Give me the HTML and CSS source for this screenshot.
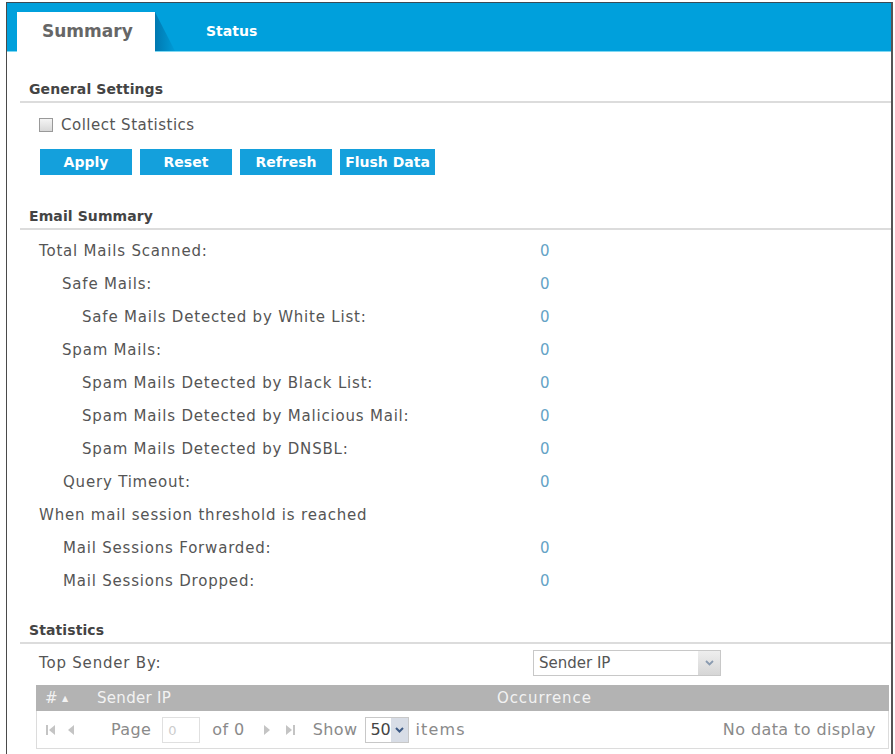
FILE: index.html
```html
<!DOCTYPE html>
<html lang="en">
<head>
    <meta charset="UTF-8">
    <meta name="viewport" content="width=device-width, initial-scale=1.0">
    <title>Anti-Spam Summary</title>
    <link rel="stylesheet" href="styles.css">
</head>
<body>

<div class="frame">
    <div class="tabs">
        <div class="tab active">Summary</div>
        <div class="tab">Status</div>
    </div>

    <div class="content">
        <div class="section-title">General Settings</div>
        <label class="check"><span class="box"></span>Collect Statistics</label>
        <div class="buttons">
            <button class="btn">Apply</button>
            <button class="btn">Reset</button>
            <button class="btn">Refresh</button>
            <button class="btn">Flush Data</button>
        </div>

        <div class="section-title email">Email Summary</div>
        <div class="stats">
            <div class="row lv0"><span class="label">Total Mails Scanned:</span><span class="value">0</span></div>
            <div class="row lv1"><span class="label">Safe Mails:</span><span class="value">0</span></div>
            <div class="row lv2"><span class="label">Safe Mails Detected by White List:</span><span class="value">0</span></div>
            <div class="row lv1"><span class="label">Spam Mails:</span><span class="value">0</span></div>
            <div class="row lv2"><span class="label">Spam Mails Detected by Black List:</span><span class="value">0</span></div>
            <div class="row lv2"><span class="label">Spam Mails Detected by Malicious Mail:</span><span class="value">0</span></div>
            <div class="row lv2"><span class="label">Spam Mails Detected by DNSBL:</span><span class="value">0</span></div>
            <div class="row lv1b"><span class="label">Query Timeout:</span><span class="value">0</span></div>
            <div class="row lv0"><span class="label">When mail session threshold is reached</span><span class="value"></span></div>
            <div class="row lv1b"><span class="label">Mail Sessions Forwarded:</span><span class="value">0</span></div>
            <div class="row lv1b"><span class="label">Mail Sessions Dropped:</span><span class="value">0</span></div>
        </div>

        <div class="section-title stat">Statistics</div>
        <div class="sender-row">
            <span class="label">Top Sender By:</span>
            <div class="select wide">
                <span class="select-text">Sender IP</span>
                <span class="select-arrow">
                    <svg width="9" height="6" viewBox="0 0 9 6"><path d="M1 1 L4.5 4.5 L8 1" fill="none" stroke="#8a9bb0" stroke-width="1.8"/></svg>
                </span>
            </div>
        </div>

        <div class="grid">
            <div class="grid-head">
                <span class="col-num">#<span class="sort">&#9650;</span></span>
                <span class="col-ip">Sender IP</span>
                <span class="col-occ">Occurrence</span>
            </div>
            <div class="pager">
                <svg class="pg-icon first" width="10" height="12" viewBox="0 0 10 12"><rect x="0" y="1" width="2" height="10" fill="#c4c4c4"/><path d="M9 1 L3 6 L9 11 Z" fill="#c4c4c4"/></svg>
                <svg class="pg-icon prev" width="8" height="12" viewBox="0 0 8 12"><path d="M7 1 L1 6 L7 11 Z" fill="#c4c4c4"/></svg>
                <span class="pg-text page">Page</span>
                <span class="pg-input">0</span>
                <span class="pg-text of">of 0</span>
                <svg class="pg-icon next" width="8" height="12" viewBox="0 0 8 12"><path d="M1 1 L7 6 L1 11 Z" fill="#c4c4c4"/></svg>
                <svg class="pg-icon last" width="10" height="12" viewBox="0 0 10 12"><path d="M1 1 L7 6 L1 11 Z" fill="#c4c4c4"/><rect x="8" y="1" width="2" height="10" fill="#c4c4c4"/></svg>
                <span class="pg-text show">Show</span>
                <div class="select small">
                    <span class="select-text">50</span>
                    <span class="select-arrow">
                        <svg width="9" height="6" viewBox="0 0 9 6"><path d="M1 1 L4.5 4.5 L8 1" fill="none" stroke="#3d5a85" stroke-width="2"/></svg>
                    </span>
                </div>
                <span class="pg-text items">items</span>
                <span class="pg-empty">No data to display</span>
            </div>
        </div>
    </div>
</div>

</body>
</html>
```

FILE: styles.css
```css
html, body {
    margin: 0;
    padding: 0;
    background-color: #fff;
}
body {
    font-family: "DejaVu Sans", Verdana, sans-serif;
    color: #555;
    overflow: hidden;
}
.frame {
    margin: 2px 0 0 6px;
    width: 884px;
    height: 760px;
    border-top: 1px solid #3a4a55;
    border-left: 1px solid #4a4a4a;
    border-right: 2px solid #555;
}

/* tab bar */
.tabs {
    display: flex;
    align-items: flex-end;
    height: 48px;
    padding-left: 10px;
    background-color: #00a0dc;
    border-bottom: 1px solid #7fd8f2;
}
.tab {
    position: relative;
    height: 39px;
    line-height: 39px;
    font-size: 14px;
    font-weight: bold;
    color: #fff;
    padding-left: 51px;
}
.tab.active {
    width: 138px;
    box-sizing: border-box;
    padding-left: 25px;
    margin-bottom: -1px;
    height: 40px;
    background-color: #fff;
    color: #666;
    font-size: 17px;
}
.tab.active::after {
    content: "";
    position: absolute;
    top: 0;
    right: -20px;
    width: 20px;
    height: 39px;
    background: linear-gradient(to right, rgba(0, 60, 110, 0.4), rgba(0, 60, 110, 0.05));
    clip-path: polygon(0 0, 100% 100%, 0 100%);
}

/* page body */
.content {
    padding-left: 13px;
}
.section-title {
    margin-top: 25px;
    padding-left: 9px;
    line-height: 24px;
    font-size: 14px;
    letter-spacing: 0.1px;
    font-weight: bold;
    color: #444;
    border-bottom: 2px solid #dcdcdc;
}
.section-title.email {
    margin-top: 29px;
}
.section-title.stat {
    margin-top: 20px;
}
.check {
    display: flex;
    align-items: center;
    height: 24px;
    margin-top: 10px;
    padding-left: 19px;
    font-size: 15px;
    letter-spacing: 0.5px;
}
.check .box {
    width: 12px;
    height: 12px;
    margin-right: 8px;
    border: 1px solid #999;
    background: linear-gradient(#f4f4f4, #d8d8d8);
}
.buttons {
    display: flex;
    gap: 8px;
    margin-top: 12px;
    padding-left: 20px;
}
.btn {
    width: 92px;
    height: 26px;
    padding: 0;
    border: none;
    background-color: #14a0dc;
    color: #fff;
    font-family: inherit;
    font-size: 14px;
    font-weight: bold;
    cursor: pointer;
}
.btn:last-child {
    width: 95px;
}

/* summary counters */
.stats {
    margin-top: 5px;
}
.row {
    display: grid;
    grid-template-columns: 520px auto;
    height: 33px;
    line-height: 33px;
    font-size: 15px;
    letter-spacing: 0.8px;
}
.row.lv0 .label { padding-left: 19px; }
.row.lv1 .label { padding-left: 42px; }
.row.lv1b .label { padding-left: 43px; }
.row.lv2 .label { padding-left: 62px; }
.value {
    color: #64a3c6;
}

/* statistics */
.sender-row {
    display: grid;
    grid-template-columns: 513px auto;
    align-items: center;
    height: 28px;
    margin-top: 5px;
    font-size: 15px;
    letter-spacing: 0.8px;
}
.sender-row .label {
    padding-left: 19px;
}
.select {
    display: flex;
    border: 1px solid #c8c8c8;
    background-color: #fff;
    box-sizing: border-box;
    letter-spacing: 0;
}
.select.wide {
    width: 188px;
    height: 26px;
}
.select.small {
    width: 44px;
    height: 26px;
}
.select-text {
    flex: 1;
    padding-left: 5px;
    line-height: 24px;
    color: #555;
}
.select-arrow {
    display: flex;
    align-items: center;
    justify-content: center;
    width: 22px;
    background: linear-gradient(#eee, #d6d6d6);
}
.grid {
    margin: 8px 2px 0 16px;
}
.grid-head {
    display: grid;
    grid-template-columns: 52px 400px auto;
    height: 26px;
    line-height: 26px;
    padding-left: 9px;
    background-color: #b3b3b3;
    color: #f2f2f2;
    font-size: 15px;
    letter-spacing: 0.3px;
}
.col-occ {
    letter-spacing: 0.9px;
}
.sort {
    margin-left: 4px;
    font-size: 8px;
    vertical-align: 2px;
}
.pager {
    display: flex;
    align-items: center;
    height: 37px;
    padding-left: 9px;
    border: 1px solid #dcdcdc;
    border-top: none;
    font-size: 16px;
    letter-spacing: 0.4px;
    color: #8a8a8a;
}
.pg-icon.prev { margin-left: 11px; }
.pg-text.page { margin-left: 36px; }
.pg-input {
    width: 38px;
    height: 26px;
    line-height: 26px;
    margin-left: 11px;
    padding-left: 5px;
    box-sizing: border-box;
    border: 1px solid #e0e0e0;
    color: #ccc;
    font-size: 13px;
}
.pg-text.of { margin-left: 12px; }
.pg-icon.next { margin-left: 18px; }
.pg-icon.last { margin-left: 14px; }
.pg-text.show { margin-left: 18px; }
.select.small { margin-left: 8px; }
.select.small .select-text {
    padding-left: 4px;
    font-size: 16px;
    color: #444;
}
.select.small .select-arrow {
    width: 17px;
    background: #d8dde6;
}
.pg-text.items {
    margin-left: 6px;
    letter-spacing: 1.2px;
}
.pg-empty {
    margin-left: auto;
    margin-right: 12px;
}
```
